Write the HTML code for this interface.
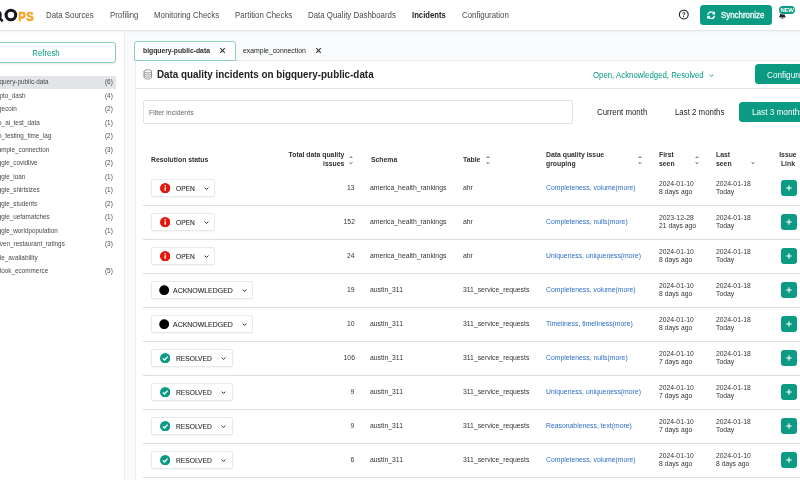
<!DOCTYPE html><html><head><meta charset="utf-8"><title>Incidents</title><style>
*{box-sizing:border-box;margin:0;padding:0}
html,body{width:800px;height:480px;overflow:hidden;background:#f9fafb;font-family:"Liberation Sans",Arial,sans-serif;color:#222;}
body{position:relative;will-change:transform}
.abs{position:absolute}
.t{position:absolute;white-space:nowrap;transform:scaleX(.88);transform-origin:0 50%}
.t.r{transform-origin:100% 50%}
.t.m{transform-origin:50% 50%}
.hdr{position:absolute;left:0;top:0;width:800px;height:31px;background:#fff;border-bottom:1px solid #e4e6e8;box-shadow:0 1px 2px rgba(0,0,0,.05)}
.nav{top:10.200px;font-size:8.950px;color:#4a4a4a;line-height:11px}
.nav.b{font-weight:bold;color:#222;font-size:8.750px}
.sidebar-bg{position:absolute;left:0;top:31px;width:125px;height:449px;background:#fff;border-right:1px solid #e9ebed}
.refresh{position:absolute;left:-24px;top:42px;width:140px;height:21px;border:1px solid #86ccbf;border-radius:3px;background:#fff;box-shadow:0 1px 2px rgba(0,0,0,.08)}
.refresh .t{left:0px;width:138px;top:.8px;color:#029a80;font-size:8.850px;text-align:center;line-height:19.500px}
.srow{position:absolute;left:-10px;width:126px;height:13px;font-size:7.230px;line-height:12.600px;color:#484848}
.srow.sel{background:#e2e4e8}
.srow .sn{left:.940px}
.srow .sc{left:114.600px}
.panel{position:absolute;left:135px;top:60px;width:680px;height:430px;background:#fff;border:1px solid #e8eaec}
.tab1{position:absolute;left:134px;top:41px;width:102px;height:20px;border:1px solid #8fd0c4;border-radius:3px 3px 0 0;background:#fff}
.tabt{top:45.600px;font-size:7.700px;line-height:10px;color:#222}
.title{left:157px;top:66.700px;font-size:11.200px;font-weight:bold;color:#222;line-height:14px}
.tline{position:absolute;left:136px;top:88px;width:664px;height:1px;background:#e3e5e7}
.filter{position:absolute;left:143px;top:100px;width:430px;height:24px;border:1px solid #e2e4e6;border-radius:2px;background:#fff}
.filter .t{left:5.200px;top:.3px;font-size:7.860px;color:#666;line-height:23px}
.oar{left:592.800px;top:69.500px;font-size:8.900px;color:#029a80;line-height:11px}
.gbtn{position:absolute;background:#0b9a82;color:#fff;border-radius:3.500px;white-space:nowrap}
.per{top:106.500px;font-size:8.950px;color:#222;line-height:11px}
.th{font-size:7.780px;font-weight:bold;color:#303030;line-height:8.500px}
.row{position:absolute;left:143px;width:657px;height:34px;border-bottom:1px solid #dcdee0}
.sbtn{position:absolute;left:8px;top:7px;height:18px;border:1px solid #e7e9eb;border-radius:2px;background:#fff;box-shadow:0 1px 1px rgba(0,0,0,.04)}
.sbtn .ic{position:absolute;left:8px;top:3px;width:10.400px;height:10.400px}
.sbtn .st{top:0;font-size:7.800px;line-height:17.600px;color:#2b2b33;-webkit-text-stroke:.12px #2b2b33}
.sbtn .chev{position:absolute;right:4px;top:4.700px;width:7px;height:7px}
.num{right:445.300px;top:0;font-size:7.750px;line-height:32.200px;color:#333}
.c{top:0;font-size:7.780px;line-height:32.200px;color:#333}
.sch{left:227.200px}.tbl{left:320px}.grp{left:402.700px;color:#2b6fc8}
.c2{top:8.200px;font-size:7.730px;line-height:8.300px;color:#333}
.fs{left:516px}.ls{left:573px}
.plus{position:absolute;left:638px;top:8px;width:16px;height:16px;background:#0b9a82;border-radius:3px}
.plus svg{width:16px;height:16px;display:block}
.sorti{position:absolute;width:6px;height:10px}

</style></head><body>
<div class="sidebar-bg"></div>
<div class="hdr">
<svg class="abs" style="left:0;top:0" width="50" height="30" viewBox="0 0 50 30">
<circle cx="-4.6" cy="15.2" r="4.85" fill="none" stroke="#15151f" stroke-width="3"/>
<path d="M-1.500 16.500 L2.600 21.300" stroke="#15151f" stroke-width="2.600" fill="none"/>
<circle cx="10.900" cy="15" r="4.800" fill="none" stroke="#15151f" stroke-width="3.100"/>
<text transform="scale(.9,1)" x="20.400 29.200" y="21.200" font-family="Liberation Sans, sans-serif" font-weight="bold" font-size="12.400" fill="#f5a424" stroke="#f5a424" stroke-width=".6">PS</text>
</svg>
<div class="t nav" style="left:46px">Data Sources</div>
<div class="t nav" style="left:109.500px">Profiling</div>
<div class="t nav" style="left:153.500px">Monitoring Checks</div>
<div class="t nav" style="left:234.500px">Partition Checks</div>
<div class="t nav" style="left:307.500px">Data Quality Dashboards</div>
<div class="t nav b" style="left:411.500px">Incidents</div>
<div class="t nav" style="left:462px">Configuration</div>
<svg class="abs" style="left:678px;top:9px" width="12" height="12" viewBox="0 0 12 12"><circle cx="5.800" cy="5.600" r="4.400" fill="none" stroke="#222" stroke-width="1.100"/><text x="5.800" y="8" text-anchor="middle" font-family="Liberation Sans, sans-serif" font-weight="bold" font-size="6.500" fill="#222">?</text></svg>
<div class="gbtn" style="left:700px;top:5px;width:72px;height:19.500px"><span class="t" style="left:21.400px;top:0;font-size:8.960px;line-height:20.600px;-webkit-text-stroke:.3px #fff">Synchronize</span>
<svg class="abs" style="left:7px;top:6px" width="8.400" height="8.400" viewBox="0 0 512 512"><path d="M370.720 133.280C339.458 104.008 298.888 87.962 255.848 88c-77.458.068-144.328 53.178-162.791 126.850-1.344 5.363-6.122 9.150-11.651 9.150H24.103c-7.498 0-13.194-6.807-11.807-14.176C33.933 94.924 134.813 8 256 8c66.448 0 126.791 26.136 171.315 68.685L463.030 40.970C478.149 25.851 504 36.559 504 57.941V192c0 13.255-10.745 24-24 24H345.941c-21.382 0-32.090-25.851-16.971-40.971l41.750-41.749zM32 296h134.059c21.382 0 32.090 25.851 16.971 40.971l-41.750 41.750c31.262 29.273 71.835 45.319 114.876 45.280 77.418-.07 144.315-53.144 162.787-126.849 1.344-5.363 6.122-9.150 11.651-9.150h57.304c7.498 0 13.194 6.807 11.807 14.176C478.067 417.076 377.187 504 256 504c-66.448 0-126.791-26.136-171.315-68.685L48.970 471.030C33.851 486.149 8 475.441 8 454.059V320c0-13.255 10.745-24 24-24z" fill="#fff"/></svg>
</div>
<svg class="abs" style="left:778.900px;top:12.400px" width="6.800" height="6.800" viewBox="0 0 448 512" preserveAspectRatio="none"><path d="M224 512c35.320 0 63.970-28.650 63.970-64H160.030c0 35.350 28.650 64 63.970 64zm215.390-149.710c-19.320-20.760-55.470-51.990-55.470-154.290 0-77.700-54.480-139.900-127.940-155.160V32c0-17.670-14.320-32-31.980-32s-31.980 14.330-31.980 32v20.840C118.560 68.100 64.080 130.300 64.080 208c0 102.300-36.150 133.530-55.470 154.290-6 6.450-8.660 14.160-8.610 21.710.11 16.400 12.980 32 32.100 32h383.800c19.120 0 32-15.600 32.100-32 .05-7.550-2.610-15.270-8.610-21.710z" fill="#222"/></svg>
<div class="abs" style="left:778.700px;top:5.800px;width:16.800px;height:8.200px;border-radius:4.100px;background:#0d9b84;box-shadow:0 0 0 .6px #fff;color:#fff;font-size:6px;font-weight:bold;line-height:8.400px;text-align:center;letter-spacing:-.2px">NEW</div>
</div>
<div class="refresh"><span class="t m">Refresh</span></div>
<div class="panel"></div>
<div class="tab1"><svg class="abs" style="left:84px;top:5px" width="7" height="7" viewBox="0 0 7 7"><path d="M1.200 1.200L5.800 5.800M5.800 1.200L1.200 5.800" stroke="#333" stroke-width="1.050"/></svg></div><div class="t tabt" style="left:143px;font-weight:bold;color:#2a2a2a">bigquery-public-data</div>
<div class="t tabt" style="left:243px;font-size:7.790px">example_connection</div><svg class="abs" style="left:315px;top:47px" width="7" height="7" viewBox="0 0 7 7"><path d="M1.200 1.200L5.800 5.800M5.800 1.200L1.200 5.800" stroke="#333" stroke-width="1.050"/></svg>
<svg class="abs" style="left:143.200px;top:69.200px" width="9.600" height="10.800" viewBox="0 0 11 12" preserveAspectRatio="none"><ellipse cx="5.500" cy="2.600" rx="4.300" ry="1.800" fill="none" stroke="#666" stroke-width=".75"/><path d="M1.200 2.600V9.400C1.200 10.400 3.100 11.200 5.500 11.200S9.800 10.400 9.800 9.400V2.600M1.200 4.900C1.200 5.900 3.100 6.700 5.500 6.700S9.800 5.900 9.800 4.900M1.200 7.200C1.200 8.200 3.100 9 5.500 9S9.800 8.200 9.800 7.200" fill="none" stroke="#666" stroke-width=".75"/></svg>
<div class="t title">Data quality incidents on bigquery-public-data</div>
<div class="t oar">Open, Acknowledged, Resolved</div>
<svg class="abs" style="left:708.300px;top:71.600px" width="7" height="7" viewBox="0 0 10 10"><path d="M2.500 3.800 L5 6.300 L7.500 3.800" fill="none" stroke="#029a80" stroke-width="1.300"/></svg>
<div class="gbtn" style="left:755px;top:64px;width:60px;height:20px"><span class="t" style="left:12px;top:.6px;font-size:9.300px;line-height:20px">Configure</span></div>
<div class="tline"></div>
<div class="filter"><span class="t">Filter incidents</span></div>
<div class="t per" style="left:597px">Current month</div>
<div class="t per" style="left:675px">Last 2 months</div>
<div class="gbtn" style="left:739px;top:102px;width:70px;height:20px"><span class="t" style="left:12.500px;top:0;font-size:9.300px;line-height:20px">Last 3 months</span></div>
<div class="t th" style="left:150.800px;top:156px">Resolution status</div>
<div class="t r th" style="right:455.500px;top:151.250px;text-align:right">Total data quality<br>issues</div>
<div class="t th" style="left:370.600px;top:156px">Schema</div>
<div class="t th" style="left:463px;top:156px">Table</div>
<div class="t th" style="left:545.700px;top:151.250px">Data quality issue<br>grouping</div>
<div class="t th" style="left:658.800px;top:151.250px">First<br>seen</div>
<div class="t th" style="left:716px;top:151.250px">Last<br>seen</div>
<div class="t m th" style="left:778.100px;top:151.250px;text-align:center">Issue<br>Link</div>
<svg class="sorti" style="left:348.2px;top:154.500px" viewBox="0 0 6 10"><path d="M1.700 3L3 1.700L4.300 3M1.700 7.400L3 8.700L4.300 7.400" fill="none" stroke="#444" stroke-width=".95"/></svg>
<svg class="sorti" style="left:484.7px;top:154.500px" viewBox="0 0 6 10"><path d="M1.700 3L3 1.700L4.300 3M1.700 7.400L3 8.700L4.300 7.400" fill="none" stroke="#444" stroke-width=".95"/></svg>
<svg class="sorti" style="left:636.5px;top:154.500px" viewBox="0 0 6 10"><path d="M1.700 3L3 1.700L4.300 3M1.700 7.400L3 8.700L4.300 7.400" fill="none" stroke="#444" stroke-width=".95"/></svg>
<svg class="sorti" style="left:693.9px;top:154.500px" viewBox="0 0 6 10"><path d="M1.700 3L3 1.700L4.300 3M1.700 7.400L3 8.700L4.300 7.400" fill="none" stroke="#444" stroke-width=".95"/></svg>
<svg class="sorti" style="left:749.9px;top:154.500px" viewBox="0 0 6 10"><path d="M1.700 7.400L3 8.700L4.300 7.400" fill="none" stroke="#444" stroke-width=".95"/></svg>

<div class="side">
<div class="srow sel" style="top:76.0px"><span class="t sn">bigquery-public-data</span><span class="t sc">(6)</span></div>
<div class="srow" style="top:89.5px"><span class="t sn">crypto_dash</span><span class="t sc">(4)</span></div>
<div class="srow" style="top:103.0px"><span class="t sn">dogecoin</span><span class="t sc">(2)</span></div>
<div class="srow" style="top:116.5px"><span class="t sn">dqo_ai_test_data</span><span class="t sc">(1)</span></div>
<div class="srow" style="top:130.0px"><span class="t sn">dqo_testing_time_lag</span><span class="t sc">(2)</span></div>
<div class="srow" style="top:143.5px"><span class="t sn">example_connection</span><span class="t sc">(3)</span></div>
<div class="srow" style="top:157.0px"><span class="t sn">kaggle_covidlive</span><span class="t sc">(2)</span></div>
<div class="srow" style="top:170.5px"><span class="t sn">kaggle_loan</span><span class="t sc">(1)</span></div>
<div class="srow" style="top:184.0px"><span class="t sn">kaggle_shirtsizes</span><span class="t sc">(1)</span></div>
<div class="srow" style="top:197.5px"><span class="t sn">kaggle_students</span><span class="t sc">(2)</span></div>
<div class="srow" style="top:211.0px"><span class="t sn">kaggle_uefamatches</span><span class="t sc">(1)</span></div>
<div class="srow" style="top:224.5px"><span class="t sn">kaggle_worldpopulation</span><span class="t sc">(1)</span></div>
<div class="srow" style="top:238.0px"><span class="t sn">maven_restaurant_ratings</span><span class="t sc">(3)</span></div>
<div class="srow" style="top:251.5px"><span class="t sn">table_availability</span><span class="t sc"></span></div>
<div class="srow" style="top:265.0px"><span class="t sn">thelook_ecommerce</span><span class="t sc">(5)</span></div>
</div>
<div class="row" style="top:172px">
<div class="sbtn" style="width:64px"><svg class="ic" style="left:7.8px" viewBox="0 0 12 12"><circle cx="6" cy="6" r="6" fill="#e3170a"/><rect x="5.2" y="5" width="1.6" height="4" fill="#fff"/><circle cx="6" cy="3.3" r="0.95" fill="#fff"/></svg><span class="t st" style="left:23.6px;font-size:7.5px">OPEN</span><svg class="chev" style="right:3.9px" viewBox="0 0 10 10"><path d="M2.400 3.700 L5 6.300 L7.600 3.700" fill="none" stroke="#222" stroke-width="1.400"/></svg></div>
<div class="t r num">13</div><div class="t c sch">america_health_rankings</div><div class="t c tbl">ahr</div>
<div class="t c grp">Completeness, volume(more)</div>
<div class="t c2 fs">2024-01-10<br>8 days ago</div><div class="t c2 ls">2024-01-18<br>Today</div>
<div class="plus"><svg viewBox="0 0 16 16"><path d="M8 5.200V10.800M5.200 8H10.800" stroke="#fff" stroke-width="1.100" fill="none"/></svg></div>
</div>
<div class="row" style="top:206px">
<div class="sbtn" style="width:64px"><svg class="ic" style="left:7.8px" viewBox="0 0 12 12"><circle cx="6" cy="6" r="6" fill="#e3170a"/><rect x="5.2" y="5" width="1.6" height="4" fill="#fff"/><circle cx="6" cy="3.3" r="0.95" fill="#fff"/></svg><span class="t st" style="left:23.6px;font-size:7.5px">OPEN</span><svg class="chev" style="right:3.9px" viewBox="0 0 10 10"><path d="M2.400 3.700 L5 6.300 L7.600 3.700" fill="none" stroke="#222" stroke-width="1.400"/></svg></div>
<div class="t r num">152</div><div class="t c sch">america_health_rankings</div><div class="t c tbl">ahr</div>
<div class="t c grp">Completeness, nulls(more)</div>
<div class="t c2 fs">2023-12-28<br>21 days ago</div><div class="t c2 ls">2024-01-18<br>Today</div>
<div class="plus"><svg viewBox="0 0 16 16"><path d="M8 5.200V10.800M5.200 8H10.800" stroke="#fff" stroke-width="1.100" fill="none"/></svg></div>
</div>
<div class="row" style="top:240px">
<div class="sbtn" style="width:64px"><svg class="ic" style="left:7.8px" viewBox="0 0 12 12"><circle cx="6" cy="6" r="6" fill="#e3170a"/><rect x="5.2" y="5" width="1.6" height="4" fill="#fff"/><circle cx="6" cy="3.3" r="0.95" fill="#fff"/></svg><span class="t st" style="left:23.6px;font-size:7.5px">OPEN</span><svg class="chev" style="right:3.9px" viewBox="0 0 10 10"><path d="M2.400 3.700 L5 6.300 L7.600 3.700" fill="none" stroke="#222" stroke-width="1.400"/></svg></div>
<div class="t r num">24</div><div class="t c sch">america_health_rankings</div><div class="t c tbl">ahr</div>
<div class="t c grp">Uniqueness, uniqueness(more)</div>
<div class="t c2 fs">2024-01-10<br>8 days ago</div><div class="t c2 ls">2024-01-18<br>Today</div>
<div class="plus"><svg viewBox="0 0 16 16"><path d="M8 5.200V10.800M5.200 8H10.800" stroke="#fff" stroke-width="1.100" fill="none"/></svg></div>
</div>
<div class="row" style="top:274px">
<div class="sbtn" style="width:101.5px"><svg class="ic" style="left:7px" viewBox="0 0 12 12"><circle cx="6" cy="6" r="5.7" fill="#000"/></svg><span class="t st" style="left:21.2px;font-size:7.9px">ACKNOWLEDGED</span><svg class="chev" style="right:3.4px" viewBox="0 0 10 10"><path d="M2.400 3.700 L5 6.300 L7.600 3.700" fill="none" stroke="#222" stroke-width="1.400"/></svg></div>
<div class="t r num">19</div><div class="t c sch">austin_311</div><div class="t c tbl">311_service_requests</div>
<div class="t c grp">Completeness, volume(more)</div>
<div class="t c2 fs">2024-01-10<br>8 days ago</div><div class="t c2 ls">2024-01-18<br>Today</div>
<div class="plus"><svg viewBox="0 0 16 16"><path d="M8 5.200V10.800M5.200 8H10.800" stroke="#fff" stroke-width="1.100" fill="none"/></svg></div>
</div>
<div class="row" style="top:308px">
<div class="sbtn" style="width:101.5px"><svg class="ic" style="left:7px" viewBox="0 0 12 12"><circle cx="6" cy="6" r="5.7" fill="#000"/></svg><span class="t st" style="left:21.2px;font-size:7.9px">ACKNOWLEDGED</span><svg class="chev" style="right:3.4px" viewBox="0 0 10 10"><path d="M2.400 3.700 L5 6.300 L7.600 3.700" fill="none" stroke="#222" stroke-width="1.400"/></svg></div>
<div class="t r num">10</div><div class="t c sch">austin_311</div><div class="t c tbl">311_service_requests</div>
<div class="t c grp">Timeliness, timeliness(more)</div>
<div class="t c2 fs">2024-01-10<br>8 days ago</div><div class="t c2 ls">2024-01-18<br>Today</div>
<div class="plus"><svg viewBox="0 0 16 16"><path d="M8 5.200V10.800M5.200 8H10.800" stroke="#fff" stroke-width="1.100" fill="none"/></svg></div>
</div>
<div class="row" style="top:342px">
<div class="sbtn" style="width:81.5px"><svg class="ic" style="left:7.8px" viewBox="0 0 12 12"><circle cx="6" cy="6" r="6" fill="#0b9a82"/><path d="M3.2 6.200 L5.200 8.100 L8.800 4.200" fill="none" stroke="#fff" stroke-width="1.500"/></svg><span class="t st" style="left:23.6px;font-size:7.58px">RESOLVED</span><svg class="chev" style="right:4.6px" viewBox="0 0 10 10"><path d="M2.400 3.700 L5 6.300 L7.600 3.700" fill="none" stroke="#222" stroke-width="1.400"/></svg></div>
<div class="t r num">106</div><div class="t c sch">austin_311</div><div class="t c tbl">311_service_requests</div>
<div class="t c grp">Completeness, nulls(more)</div>
<div class="t c2 fs">2024-01-10<br>7 days ago</div><div class="t c2 ls">2024-01-18<br>Today</div>
<div class="plus"><svg viewBox="0 0 16 16"><path d="M8 5.200V10.800M5.200 8H10.800" stroke="#fff" stroke-width="1.100" fill="none"/></svg></div>
</div>
<div class="row" style="top:376px">
<div class="sbtn" style="width:81.5px"><svg class="ic" style="left:7.8px" viewBox="0 0 12 12"><circle cx="6" cy="6" r="6" fill="#0b9a82"/><path d="M3.2 6.200 L5.200 8.100 L8.800 4.200" fill="none" stroke="#fff" stroke-width="1.500"/></svg><span class="t st" style="left:23.6px;font-size:7.58px">RESOLVED</span><svg class="chev" style="right:4.6px" viewBox="0 0 10 10"><path d="M2.400 3.700 L5 6.300 L7.600 3.700" fill="none" stroke="#222" stroke-width="1.400"/></svg></div>
<div class="t r num">9</div><div class="t c sch">austin_311</div><div class="t c tbl">311_service_requests</div>
<div class="t c grp">Uniqueness, uniqueness(more)</div>
<div class="t c2 fs">2024-01-10<br>7 days ago</div><div class="t c2 ls">2024-01-18<br>Today</div>
<div class="plus"><svg viewBox="0 0 16 16"><path d="M8 5.200V10.800M5.200 8H10.800" stroke="#fff" stroke-width="1.100" fill="none"/></svg></div>
</div>
<div class="row" style="top:410px">
<div class="sbtn" style="width:81.5px"><svg class="ic" style="left:7.8px" viewBox="0 0 12 12"><circle cx="6" cy="6" r="6" fill="#0b9a82"/><path d="M3.2 6.200 L5.200 8.100 L8.800 4.200" fill="none" stroke="#fff" stroke-width="1.500"/></svg><span class="t st" style="left:23.6px;font-size:7.58px">RESOLVED</span><svg class="chev" style="right:4.6px" viewBox="0 0 10 10"><path d="M2.400 3.700 L5 6.300 L7.600 3.700" fill="none" stroke="#222" stroke-width="1.400"/></svg></div>
<div class="t r num">9</div><div class="t c sch">austin_311</div><div class="t c tbl">311_service_requests</div>
<div class="t c grp">Reasonableness, text(more)</div>
<div class="t c2 fs">2024-01-10<br>7 days ago</div><div class="t c2 ls">2024-01-18<br>Today</div>
<div class="plus"><svg viewBox="0 0 16 16"><path d="M8 5.200V10.800M5.200 8H10.800" stroke="#fff" stroke-width="1.100" fill="none"/></svg></div>
</div>
<div class="row" style="top:444px">
<div class="sbtn" style="width:81.5px"><svg class="ic" style="left:7.8px" viewBox="0 0 12 12"><circle cx="6" cy="6" r="6" fill="#0b9a82"/><path d="M3.2 6.200 L5.200 8.100 L8.800 4.200" fill="none" stroke="#fff" stroke-width="1.500"/></svg><span class="t st" style="left:23.6px;font-size:7.58px">RESOLVED</span><svg class="chev" style="right:4.6px" viewBox="0 0 10 10"><path d="M2.400 3.700 L5 6.300 L7.600 3.700" fill="none" stroke="#222" stroke-width="1.400"/></svg></div>
<div class="t r num">6</div><div class="t c sch">austin_311</div><div class="t c tbl">311_service_requests</div>
<div class="t c grp">Completeness, volume(more)</div>
<div class="t c2 fs">2024-01-10<br>8 days ago</div><div class="t c2 ls">2024-01-10<br>8 days ago</div>
<div class="plus"><svg viewBox="0 0 16 16"><path d="M8 5.200V10.800M5.200 8H10.800" stroke="#fff" stroke-width="1.100" fill="none"/></svg></div>
</div>
</body></html>
